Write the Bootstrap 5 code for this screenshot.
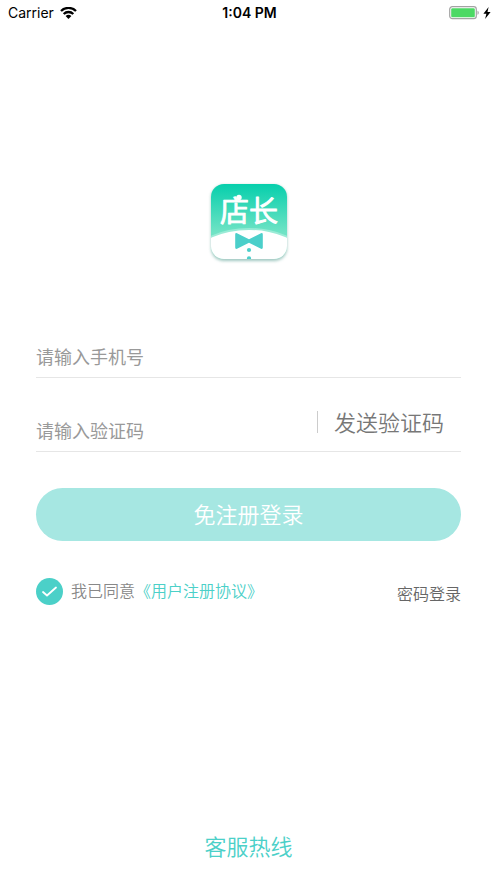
<!DOCTYPE html>
<html lang="zh-CN">
<head>
<meta charset="utf-8">
<meta name="viewport" content="width=device-width, initial-scale=1">
<title>店长登录</title>
<link href="https://cdn.jsdelivr.net/npm/bootstrap@5.3.0/dist/css/bootstrap.min.css" rel="stylesheet">
<style>
  :root { --teal: #4bd0c8; --teal-pale: #a6e7e2; --hint: #999; }
  body { font-family: "Noto Sans CJK SC", sans-serif; background: #fff; }
  .status-bar { font-family: Inter, "Liberation Sans", sans-serif; font-size: 14px; line-height: 26px; color: #000; padding: 0 6px 0 8px; }
  .status-bar svg, .brand-logo { display: block; }
  .clock { font-weight: 600; }
  .carrier { gap: 6px; }
  .brand { padding-top: 150px; }
  .sheet { padding: 69px 36px 0; }
  .field-row { border-bottom: 1px solid #e6e6e6; }
  .field-row + .field-row { padding-top: 19px; }
  .field-row .form-control { height: 42px; font-size: 18px; line-height: 34px; padding: 4px 0; min-width: 0; color: #333; }
  .field-row .form-control::placeholder { color: var(--hint); opacity: 1; line-height: 34px; }
  .code-field { padding-top: 12px; }
  .send-code { padding-bottom: 4px; }
  .divider { width: 1px; height: 22px; background: #ccc; }
  .btn-code { font-size: 22px; line-height: 32px; font-weight: 350; color: #777; padding: 0 17px 2px 16px; }
  .btn-login { font-size: 22px; line-height: 33px; font-weight: 350; padding: 9px 10px 11px; border: 0; margin-top: 36px;
    color: #fff; background: var(--teal-pale); }
  .btn-login:hover { color: #fff; background: var(--teal); }
  .options { margin-top: 36px; font-size: 16px; line-height: 26px; font-weight: 350; }
  .agree { color: #888; }
  .agree .form-check-input { width: 27px; height: 27px; margin: 0; border: 0; border-radius: 50%; background-color: #ddd; }
  .agree .form-check-input:checked { background-color: var(--teal);
    background-image: url("data:image/svg+xml,%3Csvg xmlns='http://www.w3.org/2000/svg' viewBox='0 0 27 27'%3E%3Cpath d='M7 14l4 3.500 9-8' fill='none' stroke='white' stroke-width='1.8' stroke-linecap='round' stroke-linejoin='round'/%3E%3C/svg%3E"); }
  .agree label, .agree a { padding-bottom: 2px; }
  .teal-link { color: var(--teal); }
  .password-link { color: #666; padding-top: 3px; }
  .hotline { font-size: 22px; line-height: 32px; font-weight: 350; margin-bottom: 22px; }
</style>
<script src="https://cdn.jsdelivr.net/npm/bootstrap@5.3.0/dist/js/bootstrap.bundle.min.js" defer></script>
</head>
<body class="d-flex flex-column min-vh-100">
<header class="status-bar row g-0 align-items-center">
  <div class="carrier col d-flex align-items-center">
    <span>Carrier</span>
    <svg width="17" height="13" viewBox="0 0 17 13" aria-hidden="true">
      <g fill="none" stroke="#000" stroke-width="2.3">
        <path d="M1 4a10.700 10.700 0 0 1 15 0"/>
        <path d="M3.700 7a6.800 6.800 0 0 1 9.600 0"/>
      </g>
      <path d="M8.500 12 5.600 9.100a4.100 4.100 0 0 1 5.800 0z"/>
    </svg>
  </div>
  <div class="col-auto clock">1:04 PM</div>
  <div class="col d-flex justify-content-end align-items-center gap-1">
    <svg width="31" height="14" viewBox="0 0 31 14" aria-hidden="true">
      <rect x="1.7" y=".7" width="26.6" height="12" rx="2.6" fill="none" stroke="#a3a3a3" stroke-width="1.2"/>
      <rect x="3.2" y="2.2" width="23.600" height="9" rx="1.3" fill="#4cd964"/>
      <path d="M29.500 4.700c1.700.8 1.700 3.200 0 4z" fill="#a3a3a3"/>
    </svg>
    <svg width="8" height="12" viewBox="0 0 8 12" aria-hidden="true"><path d="M5.600 0 .4 6.700h3L2.100 12l5.500-7.100H4.500z"/></svg>
  </div>
</header>

<main class="flex-grow-1">
  <div class="brand d-flex justify-content-center">
    <svg class="brand-logo" width="90" height="90" viewBox="0 0 90 90" role="img" aria-label="店长">
      <defs>
        <linearGradient id="sky" x1="0" y1="0" x2="0" y2="1">
          <stop offset="0" stop-color="#06cfac"/><stop offset=".65" stop-color="#70e3c5"/>
        </linearGradient>
        <clipPath id="tile"><rect x="7" y="8" width="76" height="75" rx="13"/></clipPath>
        <filter id="soft" x="-20%" y="-20%" width="140%" height="140%"><feGaussianBlur stdDeviation="1.5"/></filter>
      </defs>
      <rect x="7" y="9" width="76" height="76" rx="13" fill="#7fb5ab" opacity=".75" filter="url(#soft)"/>
      <g clip-path="url(#tile)">
        <rect x="7" y="8" width="76" height="75" fill="url(#sky)"/>
        <ellipse cx="45" cy="78" rx="53" ry="26" fill="#fff" opacity=".3"/>
        <ellipse cx="45" cy="79" rx="52" ry="25" fill="#fff"/>
        <circle cx="45" cy="74" r="2.1" fill="#4bcfca"/>
        <circle cx="45" cy="82.3" r="2.1" fill="#4bcfca"/>
      </g>
      <path d="M33 57.200 45 63.300l12-6.100q1.800-.6 1.800 1.300V71.500q0 1.900-1.800 1.300L45 66.700l-12 6.100q-1.800.6-1.800-1.300V58.500q0-1.900 1.800-1.300z" fill="#4bcfca"/>
      <text x="45" y="46" text-anchor="middle" font-family="Noto Sans CJK SC, sans-serif" font-size="29" font-weight="350" fill="#fff" stroke="#fff" stroke-width="1" stroke-linejoin="round">店长</text>
      <circle cx="35" cy="21.500" r="2.700" fill="#fff"/>
    </svg>
  </div>

  <form class="sheet">
    <div class="field-row">
      <input class="form-control border-0 shadow-none rounded-0" id="phone" type="tel" aria-label="手机号" placeholder="请输入手机号">
    </div>
    <div class="field-row d-flex align-items-center">
      <div class="code-field flex-grow-1">
        <input class="form-control border-0 shadow-none rounded-0" id="code" type="text" inputmode="numeric" aria-label="验证码" placeholder="请输入验证码">
      </div>
      <div class="send-code d-flex align-items-center">
        <span class="divider"></span>
        <button class="btn btn-code border-0 text-nowrap" type="button">发送验证码</button>
      </div>
    </div>
    <button class="btn btn-login rounded-pill w-100" type="submit">免注册登录</button>
    <div class="options d-flex justify-content-between align-items-start">
      <div class="agree d-flex align-items-center">
        <input class="form-check-input flex-shrink-0" id="agree" type="checkbox" checked>
        <label class="ps-2" for="agree">我已同意</label>
        <a class="teal-link text-decoration-none" href="#terms">《用户注册协议》</a>
      </div>
      <a class="password-link text-decoration-none text-nowrap" href="#password">密码登录</a>
    </div>
  </form>
</main>

<footer class="text-center">
  <a class="hotline teal-link text-decoration-none d-inline-block" href="#hotline">客服热线</a>
</footer>
</body>
</html>
